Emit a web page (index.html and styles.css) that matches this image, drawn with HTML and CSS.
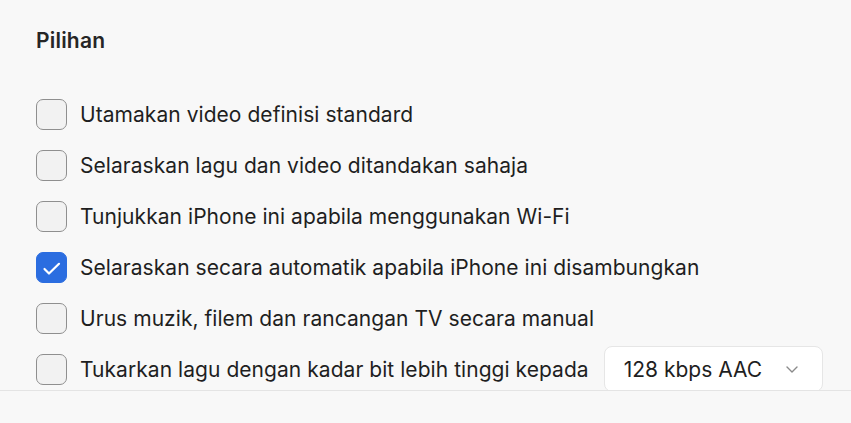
FILE: index.html
```html
<!DOCTYPE html>
<html lang="ms">
<head>
<meta charset="utf-8">
<title>Pilihan</title>
<link rel="stylesheet" href="styles.css">
</head>
<body>
<div class="panel">
  <div class="content">
    <h2 class="title">Pilihan</h2>
    <div class="options">
      <label class="row"><span class="box"></span><span class="label">Utamakan video definisi standard</span></label>
      <label class="row"><span class="box"></span><span class="label">Selaraskan lagu dan video ditandakan sahaja</span></label>
      <label class="row"><span class="box"></span><span class="label">Tunjukkan iPhone ini apabila menggunakan Wi-Fi</span></label>
      <label class="row"><span class="box checked"><svg viewBox="0 0 28 28" width="28" height="28"><path d="M6.5 16 L11 20.5 L21 10.8" fill="none" stroke="#fff" stroke-width="2.2" stroke-linecap="round" stroke-linejoin="round"/></svg></span><span class="label">Selaraskan secara automatik apabila iPhone ini disambungkan</span></label>
      <label class="row"><span class="box"></span><span class="label">Urus muzik, filem dan rancangan TV secara manual</span></label>
      <label class="row"><span class="box"></span><span class="label">Tukarkan lagu dengan kadar bit lebih tinggi kepada</span>
        <span class="select"><span class="select-text">128 kbps AAC</span><svg class="chev" viewBox="0 0 12 7" width="12" height="7"><path d="M1 1 L6 6 L11 1" fill="none" stroke="#8a8a8a" stroke-width="1.4" stroke-linecap="round" stroke-linejoin="round"/></svg></span>
      </label>
    </div>
  </div>
  <div class="footer"></div>
</div>
</body>
</html>
```
FILE: styles.css
```css
* { box-sizing: border-box; }
html, body { margin: 0; padding: 0; }
body {
  background: #f8f8f8;
  font-family: Inter, "Noto Sans", "Liberation Sans", sans-serif;
  color: #1f1f1f;
  width: 851px;
  height: 423px;
  overflow: hidden;
}
.panel {
  display: flex;
  flex-direction: column;
  height: 423px;
}
.content {
  height: 391px;
  overflow: hidden;
  padding: 28px 0 0 36px;
  border-bottom: 1px solid #e4e4e4;
  flex: none;
}
.title {
  margin: 0;
  font-size: 21px;
  line-height: 25px;
  font-weight: 600;
  color: #262626;
  letter-spacing: 0.2px;
}
.options {
  display: flex;
  flex-direction: column;
  margin-top: 35.5px;
}
.row {
  display: flex;
  align-items: center;
  height: 51px;
  gap: 13px;
}
.box {
  width: 31px;
  height: 31px;
  border: 1.5px solid #8f8f8f;
  border-radius: 7px;
  background: #f2f2f2;
  flex: none;
  display: flex;
  align-items: center;
  justify-content: center;
}
.box.checked {
  background: #2b6de0;
  border-color: #2b6de0;
}
.label {
  font-size: 21px;
  line-height: 25px;
  color: #1f1f1f;
  white-space: nowrap;
  letter-spacing: 0.05px;
}
.select {
  margin-left: 2px;
  width: 219px;
  height: 46px;
  flex: none;
  background: #fff;
  border: 1px solid #e6e6e6;
  border-radius: 8px;
  display: flex;
  align-items: center;
  justify-content: space-between;
  padding: 0 24px 0 19px;
}
.select-text {
  font-size: 21px;
  line-height: 25px;
  color: #1f1f1f;
}
.footer {
  flex: 1;
  background: #f8f8f8;
}
```
